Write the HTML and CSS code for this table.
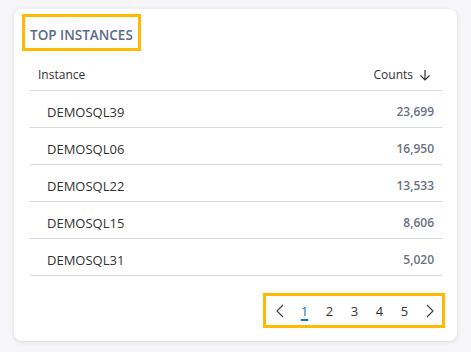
FILE: index.html
```html
<!DOCTYPE html>
<html lang="en">
<head>
    <meta charset="UTF-8">
    <title>Top Instances</title>
    <link rel="stylesheet" href="styles.css">
</head>
<body>
    <div class="card">
        <div class="card-title">TOP INSTANCES</div>

        <div class="table">
            <div class="row head">
                <span>Instance</span>
                <span class="sort">Counts
                    <svg width="12" height="12" viewBox="0 0 12 12"><path d="M6 1v10M1.5 6.5L6 11l4.5-4.5" fill="none" stroke="#333" stroke-width="1.2"/></svg>
                </span>
            </div>
            <div class="row"><span class="name">DEMOSQL39</span><span class="count">23,699</span></div>
            <div class="row"><span class="name">DEMOSQL06</span><span class="count">16,950</span></div>
            <div class="row"><span class="name">DEMOSQL22</span><span class="count">13,533</span></div>
            <div class="row"><span class="name">DEMOSQL15</span><span class="count">8,606</span></div>
            <div class="row"><span class="name">DEMOSQL31</span><span class="count">5,020</span></div>
        </div>

        <div class="pager">
            <span class="page-item">
                <svg width="8" height="14" viewBox="0 0 8 14"><path d="M7 1L1 7l6 6" fill="none" stroke="#444" stroke-width="1.2"/></svg>
            </span>
            <span class="page-item current">1</span>
            <span class="page-item">2</span>
            <span class="page-item">3</span>
            <span class="page-item">4</span>
            <span class="page-item">5</span>
            <span class="page-item">
                <svg width="8" height="14" viewBox="0 0 8 14"><path d="M1 1l6 6-6 6" fill="none" stroke="#444" stroke-width="1.2"/></svg>
            </span>
        </div>
    </div>
</body>
</html>
```

FILE: styles.css
```css
body {
    margin: 0;
    padding: 9px 14px 11px 14px;
    background-color: #f6f6f8;
    font-family: "Open Sans", "Noto Sans", sans-serif;
    color: #323130;
}
.card {
    width: 443px;
    height: 332px;
    box-sizing: border-box;
    padding: 5px 12px 13px 8px;
    background-color: #fff;
    border-radius: 8px;
    box-shadow: 0 1px 4px rgba(0, 0, 0, 0.12);
    display: flex;
    flex-direction: column;
}
.card-title {
    align-self: flex-start;
    height: 37px;
    box-sizing: border-box;
    padding: 4px 5px 0 5px;
    border: 3px solid #ffb900;
    display: flex;
    align-items: center;
    font-size: 13.5px;
    font-weight: 600;
    color: #5b6a8a;
}
.table {
    margin: 4px 3px 0 8px;
}
.row {
    height: 37px;
    box-sizing: border-box;
    padding-top: 5px;
    border-bottom: 1px solid #d9dbe3;
    display: flex;
    justify-content: space-between;
    align-items: center;
    font-size: 13px;
}
.row.head {
    height: 36px;
    font-size: 12px;
    padding: 4px 11px 0 8px;
}
.sort {
    display: flex;
    align-items: center;
    gap: 6px;
}
.name {
    padding-left: 17px;
}
.count {
    padding-right: 8px;
    color: #6b7184;
    font-weight: 600;
    font-size: 12px;
}
.pager {
    align-self: flex-end;
    margin-top: 17px;
    height: 35px;
    box-sizing: border-box;
    padding: 0 0 0 1px;
    border: 3px solid #ffb900;
    display: flex;
    align-items: center;
}
.page-item {
    width: 25px;
    display: flex;
    justify-content: center;
    font-size: 13px;
    color: #323130;
}
.page-item.current {
    color: #0078d4;
    text-decoration: underline;
    text-decoration-thickness: 1.5px;
    text-underline-offset: 3px;
}
```
